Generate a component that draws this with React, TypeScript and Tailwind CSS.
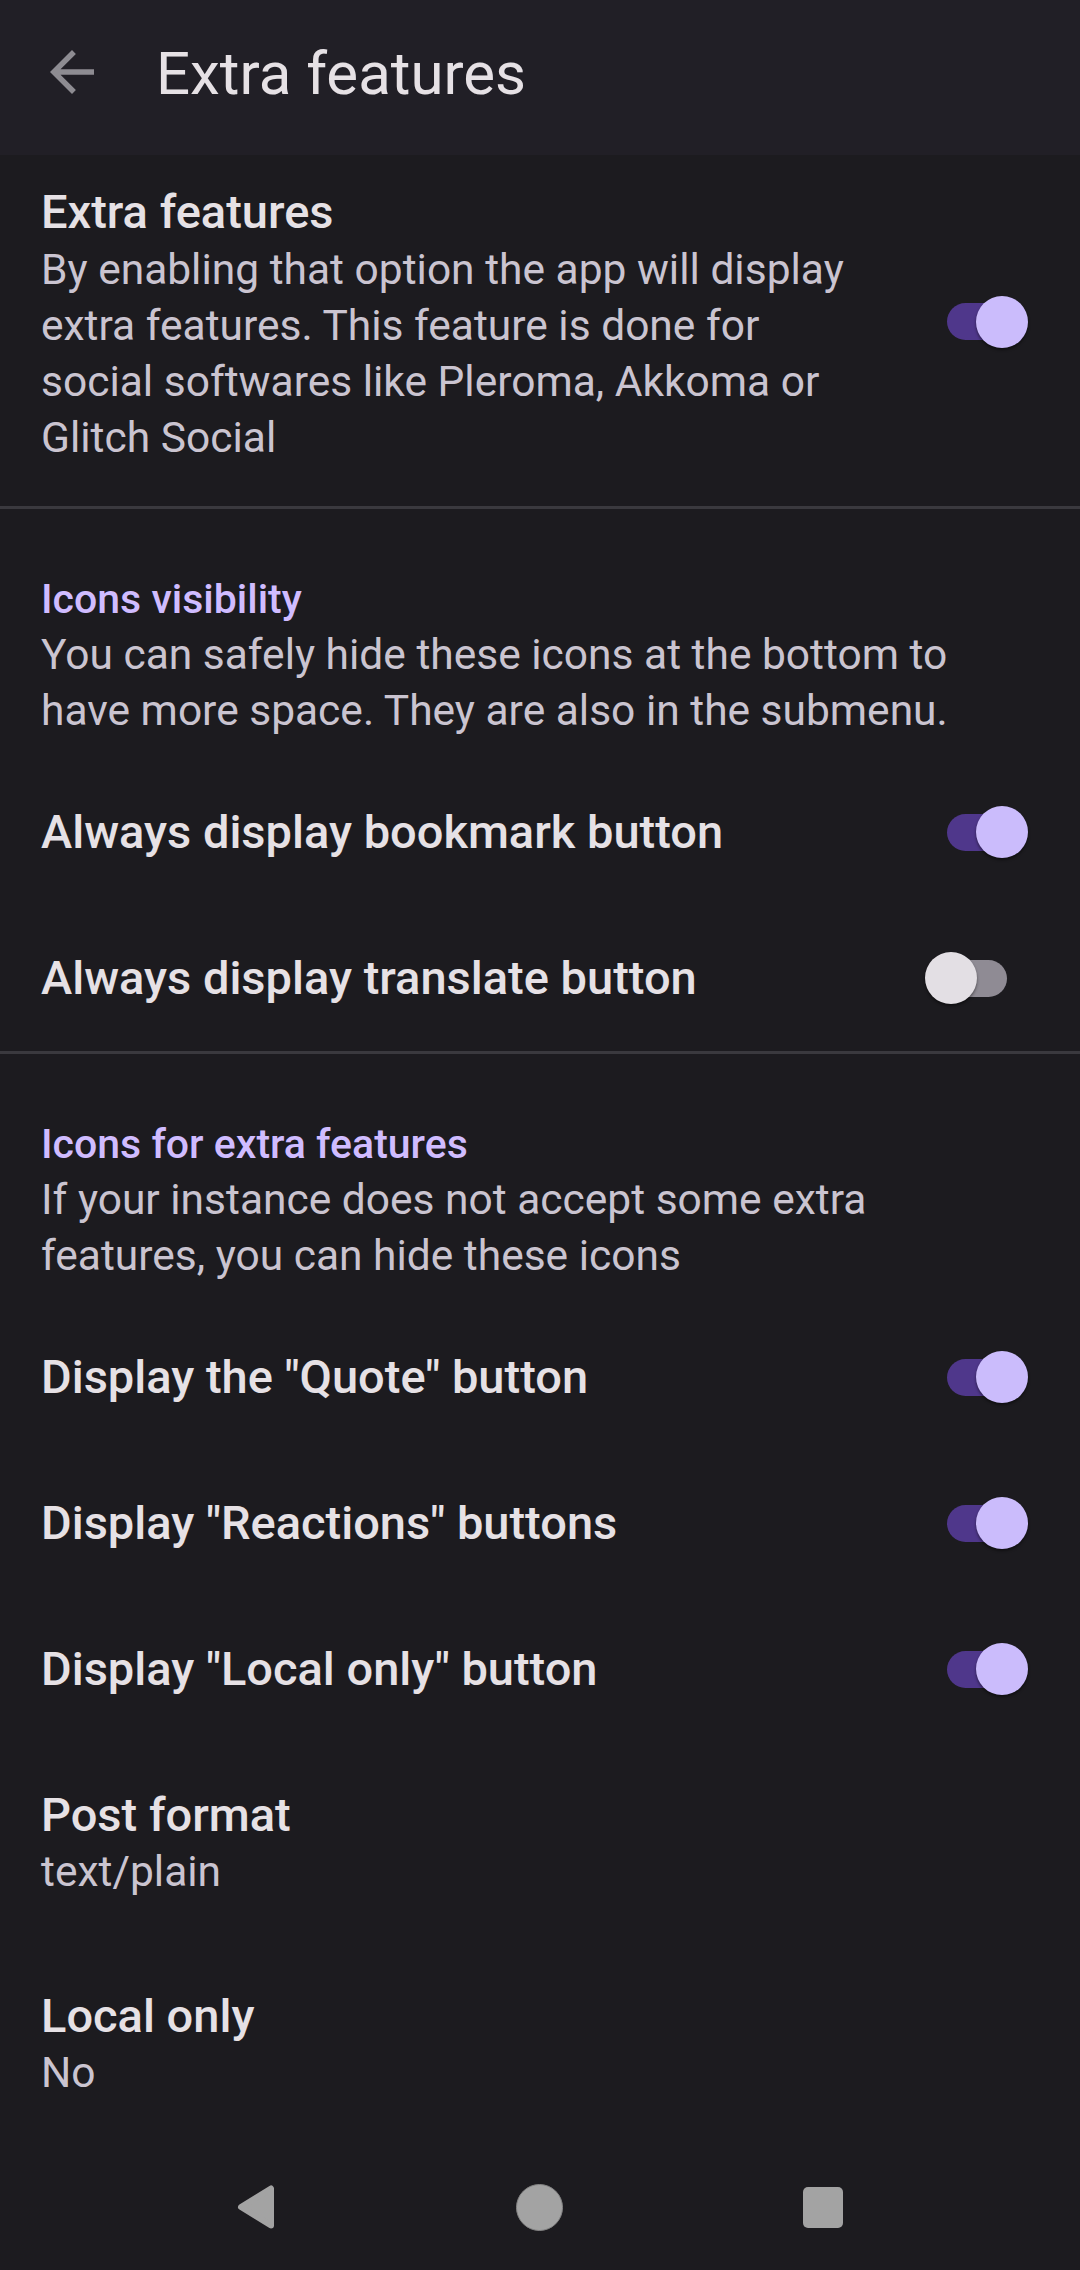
import React from "react";

const Switch = ({ on }: { on: boolean }) => (
  <div className="relative w-[103px] h-[52px] shrink-0">
    <div
      className={
        on
          ? "absolute left-[22px] top-[7.5px] w-[60px] h-[37px] rounded-full bg-[#4f378b]"
          : "absolute left-[22px] top-[7.5px] w-[60px] h-[37px] rounded-full bg-[#8f8b94]"
      }
    />
    <div
      className={
        on
          ? "absolute top-0 left-[51px] w-[52px] h-[52px] rounded-full bg-[#cbbcfc] shadow-[0_2px_3px_rgba(0,0,0,0.45)]"
          : "absolute top-0 left-0 w-[52px] h-[52px] rounded-full bg-[#e3dfe4] shadow-[0_2px_3px_rgba(0,0,0,0.45)]"
      }
    />
  </div>
);

const SwitchRow = ({ label, on }: { label: string; on: boolean }) => (
  <div className="h-[146px] flex items-center pl-[41px] pr-[52px] shrink-0">
    <div className="text-[47px] leading-[56px] font-medium text-[#e6e1e5]">{label}</div>
    <div className="ml-auto">
      <Switch on={on} />
    </div>
  </div>
);

const Category = ({ title, summary }: { title: string; summary: string }) => (
  <div className="pl-[41px] pt-[62px] pb-[20px] shrink-0">
    <div className="text-[41px] leading-[56px] font-medium text-[#d0bcff]">{title}</div>
    <div className="w-[979px] text-[42.5px] leading-[56px] text-[#cac4d0]">{summary}</div>
  </div>
);

const ValuePref = ({ title, value }: { title: string; value: string }) => (
  <div className="pl-[41px] pt-[45px] pb-[43px] shrink-0">
    <div className="text-[47px] leading-[56px] font-medium text-[#e6e1e5]">{title}</div>
    <div className="mt-[1px] text-[42.5px] leading-[56px] text-[#cac4d0]">{value}</div>
  </div>
);

const Divider = () => <div className="h-[3px] bg-[#3a393e] shrink-0" />;

export default function App() {
  return (
    <div className="w-[1080px] h-[2270px] bg-[#1c1b1f] flex flex-col overflow-hidden font-['Roboto',sans-serif]">
      {/* Top app bar */}
      <div className="h-[155px] shrink-0 bg-[#211f26] flex items-start">
        <svg
          className="ml-[39px] mt-[39px] w-[66px] h-[66px] shrink-0"
          viewBox="0 0 24 24"
          fill="#8e8c92"
        >
          <path d="M20 11H7.83l5.59-5.59L12 4l-8 8 8 8 1.41-1.41L7.83 13H20v-2z" />
        </svg>
        <div className="ml-[51px] mt-[44px] text-[60px] leading-[60px] text-[#e6e1e5]">
          Extra features
        </div>
      </div>

      {/* List */}
      <div className="flex-1 min-h-0 overflow-hidden flex flex-col">
        <div className="flex items-center pl-[41px] pr-[52px] pt-[29px] pb-[40px] shrink-0">
          <div className="w-[821px]">
            <div className="text-[47px] leading-[56px] font-medium text-[#e6e1e5]">Extra features</div>
            <div className="mt-[2px] text-[42.5px] leading-[56px] text-[#cac4d0]">
              By enabling that option the app will display extra features. This feature is done for
              social softwares like Pleroma, Akkoma or Glitch Social
            </div>
          </div>
          <div className="ml-auto -mt-[7px]">
            <Switch on={true} />
          </div>
        </div>
        <Divider />
        <Category
          title="Icons visibility"
          summary="You can safely hide these icons at the bottom to have more space. They are also in the submenu."
        />
        <SwitchRow label="Always display bookmark button" on={true} />
        <SwitchRow label="Always display translate button" on={false} />
        <Divider />
        <Category
          title="Icons for extra features"
          summary="If your instance does not accept some extra features, you can hide these icons"
        />
        <SwitchRow label={'Display the "Quote" button'} on={true} />
        <SwitchRow label={'Display "Reactions" buttons'} on={true} />
        <SwitchRow label={'Display "Local only" button'} on={true} />
        <ValuePref title="Post format" value="text/plain" />
        <ValuePref title="Local only" value="No" />
      </div>

      {/* Navigation bar */}
      <div className="h-[132px] shrink-0 bg-[#1c1b1f] flex items-center pl-[236px] pt-[6px] gap-[240px]">
        <svg className="w-[40px] h-[44px]" viewBox="0 0 40 44">
          <polygon
            points="5,22 35,3.5 35,40.5"
            fill="#a3a3a3"
            stroke="#a3a3a3"
            strokeWidth="6"
            strokeLinejoin="round"
          />
        </svg>
        <div className="w-[47px] h-[47px] rounded-full bg-[#a3a3a3] border-[1.5px] border-[#858585]" />
        <div className="w-[40px] h-[41px] rounded-[5px] bg-[#a3a3a3]" />
      </div>
    </div>
  );
}
